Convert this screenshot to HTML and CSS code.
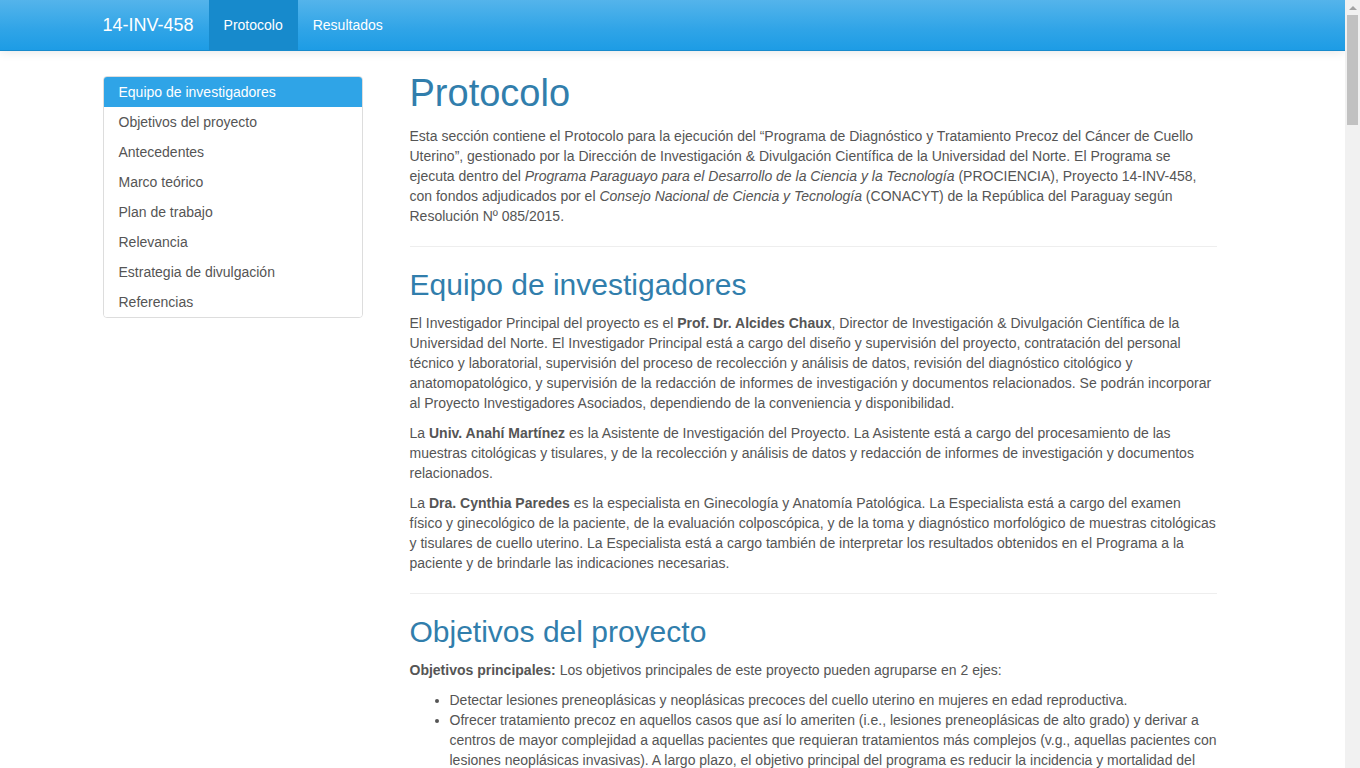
FILE: index.html
```html
<!DOCTYPE html>
<html lang="es">
<head>
<meta charset="utf-8">
<title>14-INV-458 · Protocolo</title>
<link rel="stylesheet" href="styles.css">
</head>
<body>
<nav class="navbar">
  <div class="container nav-inner">
    <a class="brand" href="#">14-INV-458</a>
    <ul class="nav-links">
      <li><a class="nav-link active" href="#">Protocolo</a></li>
      <li><a class="nav-link" href="#">Resultados</a></li>
    </ul>
  </div>
</nav>

<div class="container page">
  <aside class="sidebar">
    <ul class="list-group">
      <li><a class="list-item active" href="#equipo">Equipo de investigadores</a></li>
      <li><a class="list-item" href="#objetivos">Objetivos del proyecto</a></li>
      <li><a class="list-item" href="#antecedentes">Antecedentes</a></li>
      <li><a class="list-item" href="#marco">Marco teórico</a></li>
      <li><a class="list-item" href="#plan">Plan de trabajo</a></li>
      <li><a class="list-item" href="#relevancia">Relevancia</a></li>
      <li><a class="list-item" href="#estrategia">Estrategia de divulgación</a></li>
      <li><a class="list-item" href="#referencias">Referencias</a></li>
    </ul>
  </aside>

  <main class="main">
    <h1 class="title">Protocolo</h1>
    <p>Esta sección contiene el Protocolo para la ejecución del “Programa de Diagnóstico y Tratamiento Precoz del Cáncer de Cuello Uterino”, gestionado por la Dirección de Investigación &amp; Divulgación Científica de la Universidad del Norte. El Programa se ejecuta dentro del <em>Programa Paraguayo para el Desarrollo de la Ciencia y la Tecnología</em> (PROCIENCIA), Proyecto 14-INV-458, con fondos adjudicados por el <em>Consejo Nacional de Ciencia y Tecnología</em> (CONACYT) de la República del Paraguay según Resolución Nº 085/2015.</p>

    <hr class="divider">
    <section id="equipo">
      <h2 class="section-title">Equipo de investigadores</h2>
      <p>El Investigador Principal del proyecto es el <strong>Prof. Dr. Alcides Chaux</strong>, Director de Investigación &amp; Divulgación Científica de la Universidad del Norte. El Investigador Principal está a cargo del diseño y supervisión del proyecto, contratación del personal técnico y laboratorial, supervisión del proceso de recolección y análisis de datos, revisión del diagnóstico citológico y anatomopatológico, y supervisión de la redacción de informes de investigación y documentos relacionados. Se podrán incorporar al Proyecto Investigadores Asociados, dependiendo de la conveniencia y disponibilidad.</p>
      <p>La <strong>Univ. Anahí Martínez</strong> es la Asistente de Investigación del Proyecto. La Asistente está a cargo del procesamiento de las muestras citológicas y tisulares, y de la recolección y análisis de datos y redacción de informes de investigación y documentos relacionados.</p>
      <p>La <strong>Dra. Cynthia Paredes</strong> es la especialista en Ginecología y Anatomía Patológica. La Especialista está a cargo del examen físico y ginecológico de la paciente, de la evaluación colposcópica, y de la toma y diagnóstico morfológico de muestras citológicas y tisulares de cuello uterino. La Especialista está a cargo también de interpretar los resultados obtenidos en el Programa a la paciente y de brindarle las indicaciones necesarias.</p>
    </section>

    <hr class="divider">
    <section id="objetivos">
      <h2 class="section-title">Objetivos del proyecto</h2>
      <p><strong>Objetivos principales:</strong> Los objetivos principales de este proyecto pueden agruparse en 2 ejes:</p>
      <ul class="bullets">
        <li>Detectar lesiones preneoplásicas y neoplásicas precoces del cuello uterino en mujeres en edad reproductiva.</li>
        <li>Ofrecer tratamiento precoz en aquellos casos que así lo ameriten (i.e., lesiones preneoplásicas de alto grado) y derivar a centros de mayor complejidad a aquellas pacientes que requieran tratamientos más complejos (v.g., aquellas pacientes con lesiones neoplásicas invasivas). A largo plazo, el objetivo principal del programa es reducir la incidencia y mortalidad del cáncer de cuello uterino en la población atendida.</li>
      </ul>
      <p><strong>Objetivos secundarios:</strong> Los objetivos secundarios de este proyecto son los siguientes:</p>
      <ul class="bullets">
        <li>Determinar la prevalencia de lesiones preneoplásicas y neoplásicas del cuello uterino en la población estudiada.</li>
        <li>Evaluar la concordancia entre el diagnóstico citológico, colposcópico e histológico de las lesiones detectadas.</li>
        <li>Identificar factores de riesgo asociados a la presencia de lesiones preneoplásicas y neoplásicas del cuello uterino.</li>
        <li>Determinar la prevalencia de infección por el virus del papiloma humano (VPH) y sus genotipos en las lesiones detectadas.</li>
        <li>Capacitar a estudiantes de grado y posgrado en técnicas de diagnóstico citológico e histológico de lesiones cervicales.</li>
      </ul>
    </section>

    <hr class="divider">
    <section id="antecedentes">
      <h2 class="section-title">Antecedentes</h2>
      <p>El cáncer de cuello uterino es una de las principales causas de muerte por cáncer en mujeres a nivel mundial, especialmente en países en vías de desarrollo. En el Paraguay, el cáncer de cuello uterino ocupa el primer lugar en incidencia y mortalidad entre los tumores malignos que afectan a la mujer, con tasas que se encuentran entre las más altas de la región. La mayoría de los casos se diagnostican en estadios avanzados, lo que limita las posibilidades de tratamiento curativo y aumenta la mortalidad asociada a la enfermedad.</p>
      <p>Los programas de tamizaje basados en la citología cervical han demostrado ser eficaces para reducir la incidencia y mortalidad del cáncer de cuello uterino en países desarrollados. Sin embargo, en países con recursos limitados la cobertura de estos programas es baja, el seguimiento de las pacientes con resultados anormales es deficiente y la calidad del diagnóstico citológico es variable. Estas limitaciones explican, en gran medida, la persistencia de altas tasas de cáncer de cuello uterino en estas poblaciones.</p>
      <p>La Universidad del Norte, a través de la Dirección de Investigación &amp; Divulgación Científica, ha desarrollado diversas iniciativas orientadas a la detección precoz del cáncer de cuello uterino, incluyendo jornadas de tamizaje en comunidades urbanas y rurales, y la capacitación de personal de salud en la toma de muestras citológicas. El presente Programa busca consolidar estas iniciativas en un esquema integral de diagnóstico y tratamiento precoz.</p>
    </section>

    <hr class="divider">
    <section id="marco">
      <h2 class="section-title">Marco teórico</h2>
      <p>La infección persistente por genotipos de alto riesgo del virus del papiloma humano (VPH) es la causa necesaria para el desarrollo del cáncer de cuello uterino. La mayoría de las infecciones por VPH son transitorias y se resuelven espontáneamente; sin embargo, una proporción de ellas persiste y puede progresar a lesiones intraepiteliales escamosas de bajo y alto grado, y eventualmente a carcinoma invasor. Este proceso suele tomar varios años, lo que brinda una ventana de oportunidad para la detección y el tratamiento de las lesiones precursoras.</p>
      <p>La citología cervical convencional (Papanicolaou) continúa siendo la principal herramienta de tamizaje en nuestro medio. Las pacientes con resultados anormales deben ser evaluadas mediante colposcopía y, en caso necesario, biopsia dirigida de las áreas sospechosas. El diagnóstico histológico permite clasificar las lesiones y definir la conducta terapéutica más adecuada para cada paciente.</p>
      <p>Las lesiones intraepiteliales de alto grado pueden ser tratadas de manera eficaz mediante procedimientos escisionales o ablativos de baja complejidad, como la escisión electroquirúrgica con asa (LEEP) o la crioterapia. Estos procedimientos pueden realizarse en forma ambulatoria, con bajas tasas de complicaciones y altas tasas de curación, lo que los hace ideales para programas de tratamiento precoz.</p>
    </section>

    <hr class="divider">
    <section id="plan">
      <h2 class="section-title">Plan de trabajo</h2>
      <p>El Programa se desarrollará en las siguientes etapas:</p>
      <ul class="bullets">
        <li>Etapa 1: Adquisición de equipos e insumos, y capacitación del personal técnico y laboratorial.</li>
        <li>Etapa 2: Difusión del Programa en la comunidad e inscripción de las pacientes participantes.</li>
        <li>Etapa 3: Evaluación clínica, toma de muestras citológicas y realización de colposcopías.</li>
        <li>Etapa 4: Procesamiento y diagnóstico de las muestras citológicas y tisulares.</li>
        <li>Etapa 5: Tratamiento de las lesiones preneoplásicas y derivación de las pacientes que lo requieran.</li>
        <li>Etapa 6: Análisis de datos, redacción de informes y divulgación de los resultados.</li>
      </ul>
      <p>Todas las pacientes participantes firmarán un consentimiento informado antes de su inclusión en el Programa. Los datos obtenidos serán registrados en una base de datos diseñada para el efecto, garantizando la confidencialidad de la información de cada paciente. El protocolo del Programa fue aprobado por el Comité de Ética de la Universidad del Norte.</p>
      <p>El análisis estadístico incluirá la estimación de prevalencias con sus respectivos intervalos de confianza, la evaluación de la concordancia diagnóstica mediante el coeficiente kappa, y la identificación de factores de riesgo mediante modelos de regresión logística. Los resultados serán presentados en tablas y gráficos, y actualizados periódicamente en la sección de Resultados de este sitio.</p>
    </section>

    <hr class="divider">
    <section id="relevancia">
      <h2 class="section-title">Relevancia</h2>
      <p>El Programa permitirá ofrecer diagnóstico y tratamiento precoz de lesiones del cuello uterino a mujeres que, de otro modo, no tendrían acceso a estos servicios. Además, generará información epidemiológica actualizada sobre la prevalencia de lesiones preneoplásicas y neoplásicas en nuestra población, lo que servirá de base para el diseño de políticas públicas de prevención y control del cáncer de cuello uterino.</p>
      <p>Asimismo, el Programa contribuirá a la formación de recursos humanos en el área de la citopatología y la patología ginecológica, fortaleciendo las capacidades de investigación de la Universidad del Norte y del país en general.</p>
    </section>

    <hr class="divider">
    <section id="estrategia">
      <h2 class="section-title">Estrategia de divulgación</h2>
      <p>Los resultados del Programa serán divulgados a través de publicaciones en revistas científicas nacionales e internacionales, presentaciones en congresos y reuniones científicas, y de este sitio web, en el cual se publicarán informes periódicos de avance. Se realizarán también charlas informativas dirigidas a la comunidad sobre la importancia de la detección precoz del cáncer de cuello uterino.</p>
    </section>

    <hr class="divider">
    <section id="referencias">
      <h2 class="section-title">Referencias</h2>
      <ol class="refs">
        <li>Ferlay J, Soerjomataram I, Dikshit R, et al. Cancer incidence and mortality worldwide: sources, methods and major patterns in GLOBOCAN 2012. Int J Cancer. 2015;136:E359-86.</li>
        <li>Walboomers JM, Jacobs MV, Manos MM, et al. Human papillomavirus is a necessary cause of invasive cervical cancer worldwide. J Pathol. 1999;189:12-9.</li>
        <li>Schiffman M, Castle PE, Jeronimo J, Rodriguez AC, Wacholder S. Human papillomavirus and cervical cancer. Lancet. 2007;370:890-907.</li>
        <li>Nayar R, Wilbur DC. The Bethesda System for Reporting Cervical Cytology: Definitions, Criteria, and Explanatory Notes. 3rd ed. Springer; 2015.</li>
        <li>Darragh TM, Colgan TJ, Cox JT, et al. The Lower Anogenital Squamous Terminology Standardization Project for HPV-Associated Lesions. Arch Pathol Lab Med. 2012;136:1266-97.</li>
        <li>Sankaranarayanan R, Nene BM, Shastri SS, et al. HPV screening for cervical cancer in rural India. N Engl J Med. 2009;360:1385-94.</li>
      </ol>
    </section>
  </main>
</div>

<div class="scrollbar" aria-hidden="true">
  <div class="scrollbar-arrow"></div>
  <div class="scrollbar-thumb"></div>
</div>
</body>
</html>
```

FILE: styles.css
```css
* { box-sizing: border-box; }

html, body {
  margin: 0;
  padding: 0;
}

body {
  margin-right: 15px;
  font-family: "Liberation Sans", Arial, Helvetica, sans-serif;
  font-size: 14px;
  line-height: 20px;
  color: #555555;
  background: #ffffff;
}

a { text-decoration: none; }

.container {
  width: 1170px;
  margin: 0 auto;
  padding: 0 15px;
}

/* Navbar */
.navbar {
  height: 51px;
  background-image: linear-gradient(#54b4eb, #2fa4e7 60%, #1d9ce5);
  border-bottom: 1px solid #178acc;
  box-shadow: 0 1px 10px rgba(0, 0, 0, 0.1);
}

.nav-inner {
  display: flex;
  align-items: stretch;
  height: 50px;
}

.brand {
  display: block;
  margin-left: -15px;
  padding: 15px;
  font-size: 18px;
  line-height: 20px;
  color: #ffffff;
}

.nav-links {
  display: flex;
  list-style: none;
  margin: 0;
  padding: 0;
}

.nav-link {
  display: block;
  padding: 15px;
  line-height: 20px;
  color: #ffffff;
}

.nav-link.active {
  background-color: #178acc;
}

/* Page layout */
.page {
  display: flex;
  align-items: flex-start;
}

.sidebar {
  width: 260px;
  flex: 0 0 260px;
  margin-top: 25px;
}

.list-group {
  list-style: none;
  margin: 0;
  padding: 0;
  border: 1px solid #dddddd;
  border-radius: 4px;
  overflow: hidden;
}

.list-item {
  display: block;
  padding: 5px 15px;
  line-height: 20px;
  color: #555555;
  background: #ffffff;
}

.list-item.active {
  background-color: #2fa4e7;
  color: #ffffff;
}

.main {
  width: 807.5px;
  flex: 0 0 807.5px;
  margin-left: 47px;
  padding-bottom: 40px;
}

.title {
  font-size: 38px;
  line-height: 1.1;
  font-weight: 500;
  color: #317eac;
  margin: 22px 0 11px;
}

.section-title {
  font-size: 30px;
  line-height: 1.1;
  font-weight: 500;
  color: #317eac;
  margin: 21px 0 12px;
}

p {
  margin: 0 0 10px;
}

strong { font-weight: bold; }

.divider {
  border: 0;
  border-top: 1px solid #eeeeee;
  margin: 20px 0;
}

.bullets,
.refs {
  margin: 0 0 10px;
  padding-left: 40px;
}

/* Browser scrollbar, as it appears in the screenshot */
.scrollbar {
  position: fixed;
  top: 0;
  right: 0;
  bottom: 0;
  width: 15px;
  background: #f1f1f1;
  display: flex;
  flex-direction: column;
  align-items: center;
}

.scrollbar-arrow {
  width: 0;
  height: 0;
  margin-top: 6px;
  border-left: 4px solid transparent;
  border-right: 4px solid transparent;
  border-bottom: 4px solid #a3a3a3;
}

.scrollbar-thumb {
  width: 11px;
  height: 110px;
  margin-top: 5px;
  background: #c1c1c1;
}
```
